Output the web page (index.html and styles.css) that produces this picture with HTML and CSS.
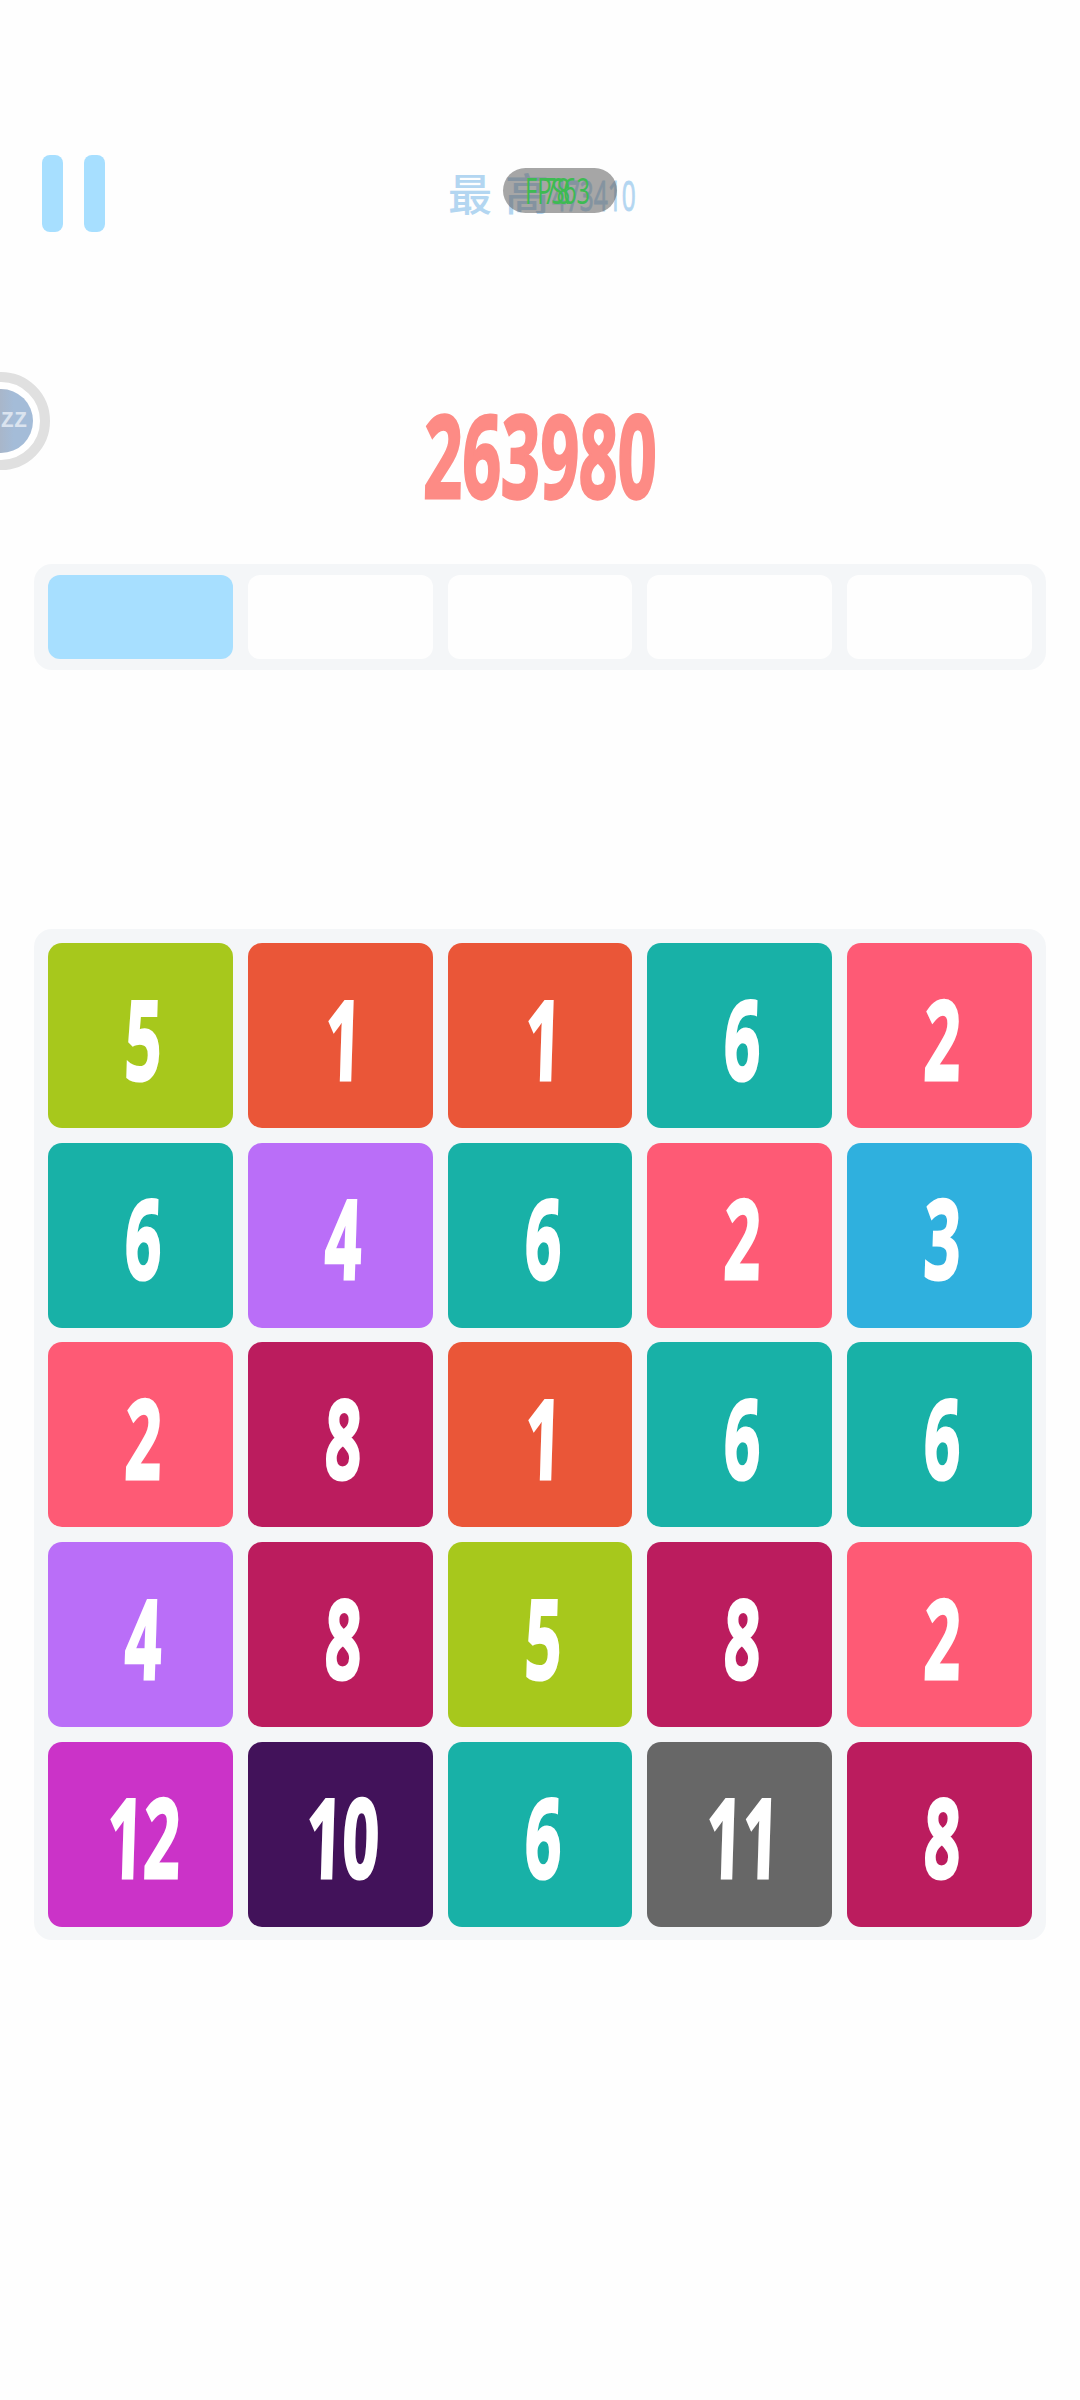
FILE: index.html
```html
<!DOCTYPE html>
<html lang="zh">
<head>
<meta charset="utf-8">
<title>2048</title>
<link rel="stylesheet" href="styles.css">
</head>
<body>
<main class="page">
  <header class="top">
    <div class="pause"><span class="bar"></span><span class="bar"></span></div>
    <div class="best">
      <span class="best-label">最</span><span class="best-label">高</span><span class="best-num">473410</span>
      <div class="fps"><span class="fps-a">FPS:</span><span class="fps-b">78</span><span class="fps-c">63</span></div>
    </div>
  </header>

  <div class="timer"><div class="timer-core"><span class="timer-text">ZZ</span></div></div>

  <div class="score"><span class="score-num">263980</span></div>

  <section class="queue">
    <div class="slot slot-on"></div>
    <div class="slot"></div>
    <div class="slot"></div>
    <div class="slot"></div>
    <div class="slot"></div>
  </section>

  <section class="board">
    <div class="tile t5"><span class="num">5</span></div>
    <div class="tile t1"><span class="num">1</span></div>
    <div class="tile t1"><span class="num">1</span></div>
    <div class="tile t6"><span class="num">6</span></div>
    <div class="tile t2"><span class="num">2</span></div>

    <div class="tile t6"><span class="num">6</span></div>
    <div class="tile t4"><span class="num">4</span></div>
    <div class="tile t6"><span class="num">6</span></div>
    <div class="tile t2"><span class="num">2</span></div>
    <div class="tile t3"><span class="num">3</span></div>

    <div class="tile t2"><span class="num">2</span></div>
    <div class="tile t8"><span class="num">8</span></div>
    <div class="tile t1"><span class="num">1</span></div>
    <div class="tile t6"><span class="num">6</span></div>
    <div class="tile t6"><span class="num">6</span></div>

    <div class="tile t4"><span class="num">4</span></div>
    <div class="tile t8"><span class="num">8</span></div>
    <div class="tile t5"><span class="num">5</span></div>
    <div class="tile t8"><span class="num">8</span></div>
    <div class="tile t2"><span class="num">2</span></div>

    <div class="tile t12"><span class="num">12</span></div>
    <div class="tile t10"><span class="num">10</span></div>
    <div class="tile t6"><span class="num">6</span></div>
    <div class="tile t11"><span class="num">11</span></div>
    <div class="tile t8"><span class="num">8</span></div>
  </section>
</main>
</body>
</html>
```
FILE: styles.css
```css
* { box-sizing: border-box; }
html, body { margin: 0; padding: 0; background: #fefefe; }
.page {
  position: relative;
  width: 1080px;
  height: 2400px;
  overflow: hidden;
  padding: 155px 34px 0;
  font-family: "Open Sans", "Liberation Sans", Arial, sans-serif;
}

/* header */
.top { position: relative; height: 77px; }
.pause { display: flex; gap: 21px; padding-left: 8px; }
.bar { width: 21px; height: 77px; border-radius: 8px; background: #a7dfff; }
.best {
  position: absolute;
  left: 414px;
  top: 18px;
  width: 190px;
  height: 44px;
  display: flex;
  align-items: center;
  color: #b3d6f1;
}
.best-label {
  font-family: "Noto Sans CJK SC", sans-serif;
  font-size: 44px;
  line-height: 44px;
  font-weight: 500;
  margin: -6px 13px 0 0;
}
.best-num {
  position: absolute;
  left: 104px;
  top: 2px;
  font-size: 42px;
  line-height: 40px;
  font-weight: 400;
  transform: scaleX(.58);
  transform-origin: left center;
  -webkit-text-stroke: 1px #b3d6f1;
}
.fps {
  position: absolute;
  left: 55px;
  top: -5px;
  width: 114px;
  height: 45px;
  border-radius: 23px;
  background: rgba(92, 92, 92, .55);
  color: #3dbb52;
  font-size: 36px;
  line-height: 45px;
}
.fps span { position: absolute; top: 0; transform: scaleX(.66); transform-origin: left center; }
.fps-a { left: 22px; }
.fps-b { left: 40px; }
.fps-c { left: 60px; }

/* side timer */
.timer {
  position: absolute;
  left: -48px;
  top: 372px;
  width: 98px;
  height: 98px;
  border-radius: 50%;
  border: 10px solid #e0e0e0;
  background: #fff;
  display: flex;
  align-items: center;
  justify-content: center;
}
.timer-core {
  flex: none;
  width: 64px;
  height: 64px;
  border-radius: 50%;
  background: linear-gradient(90deg, #aab4c4 40%, #a4bcd8 70%);
  display: flex;
  align-items: center;
  justify-content: center;
}
.timer-text {
  color: #dbe4ef;
  font-family: "Liberation Mono", monospace;
  font-size: 22px;
  font-weight: 700;
  padding-left: 26px;
}

/* score */
.score {
  display: flex;
  justify-content: center;
  margin-top: 172px;
  height: 104px;
}
.score-num {
  display: block;
  color: #fd8b85;
  font-size: 115px;
  line-height: 100px;
  font-weight: 700;
  transform: scaleX(.59) skewX(-2deg);
  -webkit-text-stroke: 3px #fd8b85;
}

/* next-tile queue */
.queue {
  display: grid;
  grid-template-columns: repeat(5, 1fr);
  gap: 15px;
  margin-top: 56px;
  height: 106px;
  padding: 11px 14px;
  border-radius: 18px;
  background: #f4f6f8;
}
.slot { border-radius: 12px; background: #fefefe; }
.slot-on { background: #a7dfff; }

/* board */
.board {
  display: grid;
  grid-template-columns: repeat(5, 1fr);
  grid-auto-rows: 185px;
  gap: 14.7px 15px;
  margin-top: 259px;
  padding: 14px;
  height: 1011px;
  border-radius: 18px;
  background: #f4f6f8;
}
.tile {
  display: flex;
  align-items: center;
  justify-content: center;
  border-radius: 14px;
  color: #fff;
}
.num {
  display: block;
  font-size: 110px;
  line-height: 116px;
  font-weight: 700;
  transform: translate(3px, 1px) scaleX(.58) skewX(-3deg);
  -webkit-text-stroke: 3px #fff;
}
.t1 { background: #ea5638; }
.t2 { background: #fe5a75; }
.t3 { background: #2fb0de; }
.t4 { background: #ba6ef8; }
.t5 { background: #a7c81c; }
.t6 { background: #18b1a7; }
.t8 { background: #bb1c5e; }
.t10 { background: #42125a; }
.t11 { background: #676767; }
.t12 { background: #cb33c8; }
```
